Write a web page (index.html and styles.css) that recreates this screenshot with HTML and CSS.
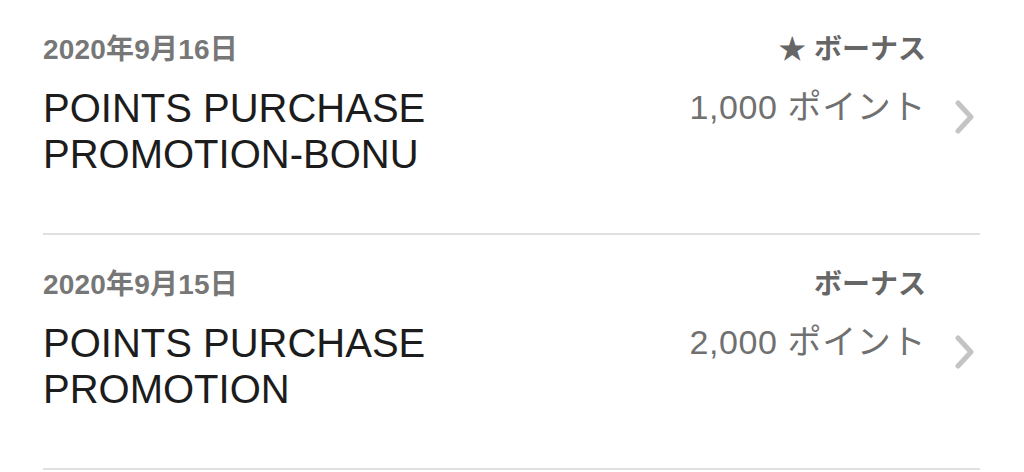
FILE: index.html
```html
<!DOCTYPE html>
<html lang="ja">
<head>
    <meta charset="UTF-8">
    <meta name="viewport" content="width=device-width, initial-scale=1.0">
    <title>ポイント履歴</title>
    <link rel="stylesheet" href="styles.css">
</head>
<body>
    <ul class="history">
        <li class="item">
            <div class="info">
                <p class="date">2020年9月16日</p>
                <h2 class="name">POINTS PURCHASE<br>PROMOTION-BONU</h2>
            </div>
            <div class="amount">
                <p class="kind"><span class="star">★</span> ボーナス</p>
                <p class="points">1,000 ポイント</p>
            </div>
            <svg class="arrow" width="20" height="34" viewBox="0 0 20 34">
                <polyline points="3,3 16,17 3,31" fill="none" stroke="#c4c4c6" stroke-width="5" stroke-linecap="round" stroke-linejoin="round"/>
            </svg>
        </li>
        <li class="item">
            <div class="info">
                <p class="date">2020年9月15日</p>
                <h2 class="name">POINTS PURCHASE<br>PROMOTION</h2>
            </div>
            <div class="amount">
                <p class="kind">ボーナス</p>
                <p class="points">2,000 ポイント</p>
            </div>
            <svg class="arrow" width="20" height="34" viewBox="0 0 20 34">
                <polyline points="3,3 16,17 3,31" fill="none" stroke="#c4c4c6" stroke-width="5" stroke-linecap="round" stroke-linejoin="round"/>
            </svg>
        </li>
    </ul>
</body>
</html>
```

FILE: styles.css
```css
* {
    margin: 0;
    padding: 0;
}

body {
    background: #fff;
    font-family: "Liberation Sans", Arial, "Noto Sans CJK JP", sans-serif;
    overflow: hidden;
}

.history {
    list-style: none;
    margin: 0 44px 0 43px;
}

.item {
    display: flex;
    align-items: flex-start;
    box-sizing: border-box;
    height: 235px;
    border-bottom: 2px solid #e0e0e0;
}

.info {
    flex: 1;
    padding-top: 34px;
}

.date {
    font-size: 28px;
    line-height: 32px;
    font-weight: bold;
    color: #777;
    letter-spacing: 0.2px;
}

.name {
    margin-top: 19px;
    font-size: 40px;
    line-height: 46px;
    font-weight: 400;
    color: #1c1c1c;
}

.amount {
    padding-top: 34px;
    text-align: right;
}

.kind {
    font-size: 28px;
    line-height: 32px;
    font-weight: bold;
    color: #666;
}

.points {
    margin-top: 18px;
    font-size: 34px;
    line-height: 46px;
    color: #707070;
    letter-spacing: 0.6px;
}

.arrow {
    align-self: center;
    margin: 0 5px 0 29px;
}
```
